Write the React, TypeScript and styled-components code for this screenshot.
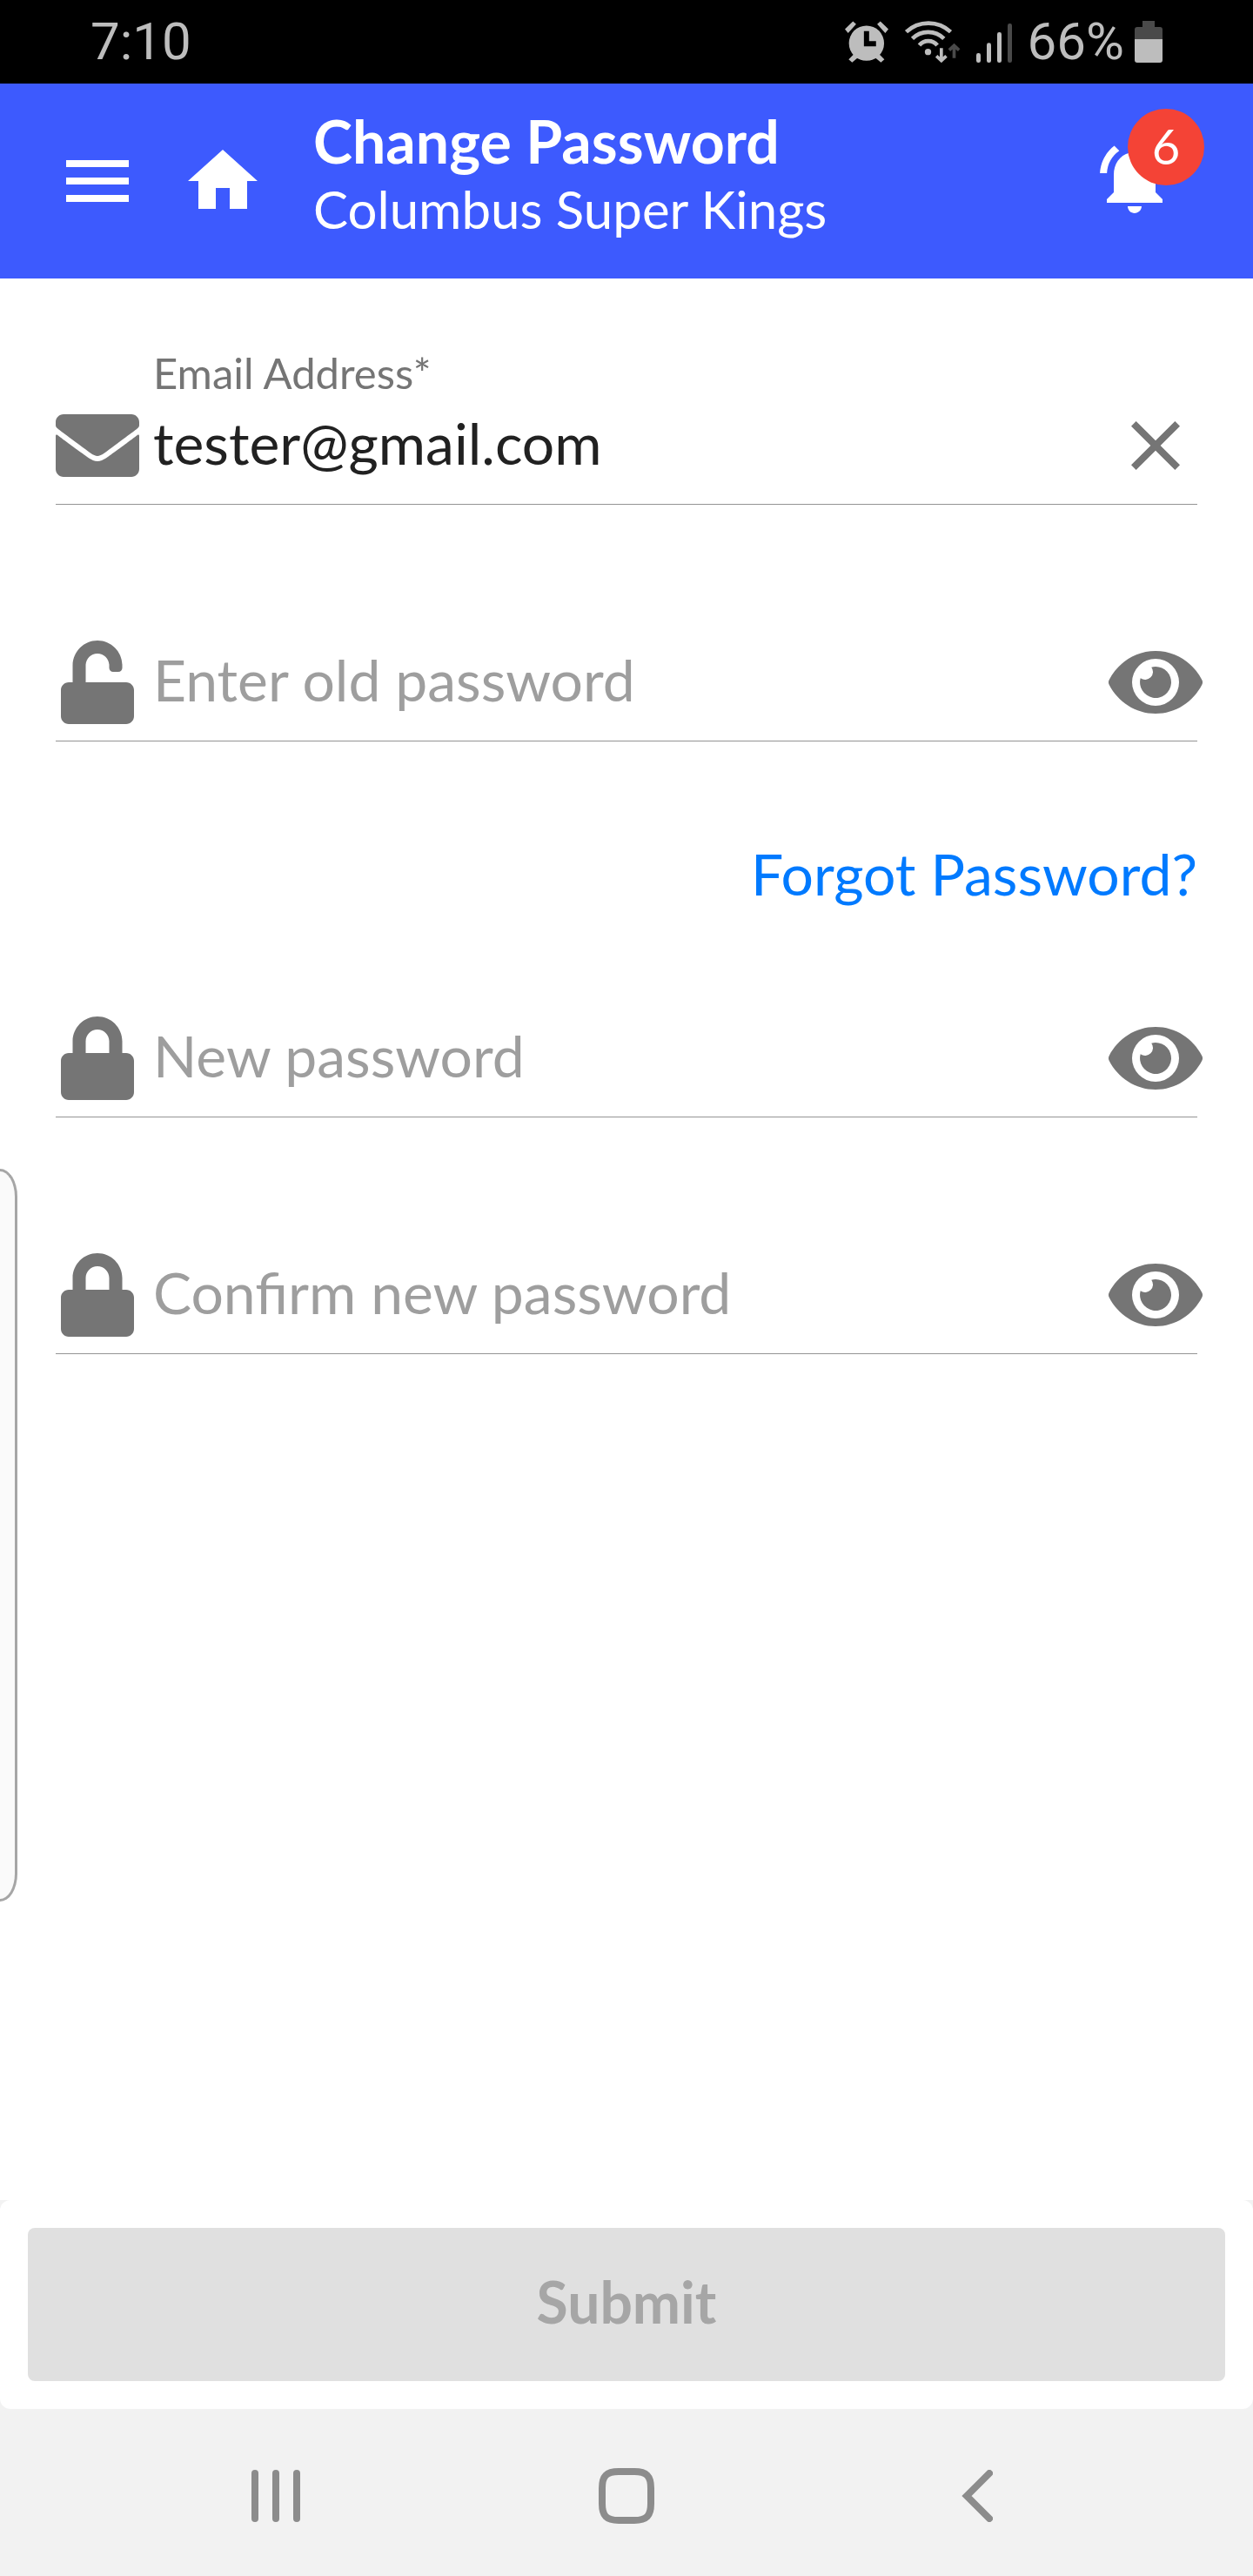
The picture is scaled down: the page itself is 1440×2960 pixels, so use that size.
import React, { useState } from "react";
import styled, { createGlobalStyle } from "styled-components";
import { FaEnvelope, FaEye, FaLock, FaUnlock } from "react-icons/fa";
import { MdClose, MdHome, MdMenu, MdNotificationsActive } from "react-icons/md";

const GlobalStyle = createGlobalStyle`
  *, *::before, *::after { box-sizing: border-box; }
  body {
    margin: 0;
    background: #fff;
    font-family: Lato, "Open Sans", sans-serif;
  }
  button, input { font-family: inherit; }
`;

const Screen = styled.div`
  position: relative;
  display: flex;
  flex-direction: column;
  min-height: 100vh;
`;

const StatusBar = styled.div`
  display: flex;
  align-items: center;
  justify-content: space-between;
  height: 96px;
  padding: 0 104px;
  background: #000;
  color: #bdbdbd;
  font-family: Roboto, sans-serif;
  font-size: 60px;
  line-height: 96px;
`;

const StatusIcons = styled.div`
  display: flex;
  align-items: center;
  gap: 18px;
  svg { display: block; height: 48px; }
`;

const Level = styled.div`
  display: flex;
  align-items: center;
  gap: 12px;
`;

const AppBar = styled.header`
  display: flex;
  align-items: center;
  height: 224px;
  padding: 0 88px 0 64px;
  background: #3d5afe;
  color: #fff;
`;

const IconButton = styled.button`
  display: flex;
  flex: none;
  align-items: center;
  justify-content: center;
  width: 96px;
  height: 96px;
  padding: 0;
  border: 0;
  background: none;
  color: inherit;
  cursor: pointer;
`;

const BarActions = styled.div`
  display: flex;
  gap: 48px;
`;

const Titles = styled.div`
  flex: 1;
  padding: 0 0 16px 56px;
`;

const Title = styled.h1`
  margin: 0;
  font-size: 68px;
  font-weight: 700;
  line-height: 80px;
`;

const Subtitle = styled.p`
  margin: 0;
  font-size: 60px;
  line-height: 76px;
`;

const BellButton = styled(IconButton)`
  position: relative;
  margin-bottom: 6px;
`;

const Badge = styled.span`
  position: absolute;
  top: -32px;
  left: 40px;
  width: 88px;
  height: 88px;
  border-radius: 50%;
  background: #f44336;
  font-size: 56px;
  line-height: 86px;
  text-align: center;
`;

const Form = styled.form`
  display: flex;
  flex: 1;
  flex-direction: column;
`;

const Fields = styled.div`
  display: flex;
  flex: 1;
  flex-direction: column;
  padding: 80px 64px;
`;

const Field = styled.div<{ $space: number }>`
  margin-top: ${(p) => p.$space}px;
  border-bottom: 1px solid #949494;
`;

const FieldLabel = styled.label`
  display: block;
  padding: 0 0 8px 112px;
  color: #757575;
  font-size: 49px;
  line-height: 56px;
`;

const FieldRow = styled.div`
  display: flex;
  align-items: center;
  gap: 16px;
  padding-bottom: 19px;
  color: #757575;
`;

const LeadIcon = styled.span`
  display: flex;
  flex: none;
  justify-content: center;
  width: 96px;
  svg { width: auto; height: 96px; }
`;

const EyeButton = styled(IconButton)`
  svg { flex: none; width: 108px; height: 96px; }
`;

const TextInput = styled.input`
  flex: 1;
  min-width: 0;
  height: 96px;
  padding: 0 0 8px;
  border: 0;
  outline: 0;
  background: none;
  color: #212121;
  font-size: 66px;
  &::placeholder { color: #9e9e9e; opacity: 1; }
`;

const ForgotLink = styled.a`
  align-self: flex-end;
  margin-top: 112px;
  color: #007aff;
  font-size: 66px;
  line-height: 80px;
  text-decoration: none;
`;

const Footer = styled.div`
  background: #f2f2f2;
`;

const FooterCard = styled.div`
  padding: 32px;
  border-radius: 12px;
  background: #fff;
`;

const SubmitButton = styled.button`
  display: block;
  width: 100%;
  height: 176px;
  padding: 0 0 8px;
  border: 0;
  border-radius: 8px;
  background: #e0e0e0;
  color: #a6a6a6;
  font-size: 66px;
  font-weight: 700;
`;

const NavBar = styled.nav`
  display: grid;
  grid-template-columns: repeat(3, 1fr);
  align-items: center;
  justify-items: center;
  height: 192px;
  padding: 8px 116px 0;
  background: #f2f2f2;
  color: #8c8c8c;
`;

const EdgeHandle = styled.div`
  position: absolute;
  top: 1343px;
  left: 0;
  width: 20px;
  height: 842px;
  border: 3px solid #a6a6a6;
  border-left: 0;
  border-radius: 0 20px 20px 0 / 0 32px 32px 0;
  background: #fafafa;
`;

function AlarmIcon() {
  return (
    <svg width="50" viewBox="94 69 151 144" fill="currentColor" aria-hidden="true">
      <circle cx="169" cy="146" r="61" />
      <path d="M94 97l28-27 11 10-28 31zM206 80l11-10 28 27-11 14zM107 202l18-18 14 12-20 17zM231 202l-18-18-14 12 20 17z" />
      <path d="M169 104v44h33" fill="none" stroke="#000" strokeWidth="18" />
    </svg>
  );
}

function WifiIcon() {
  return (
    <svg width="65" viewBox="302 69 194 144" fill="none" stroke="currentColor" strokeWidth="14" aria-hidden="true">
      <path d="M309 107a112 112 0 0 1 153 0M330 130a77 77 0 0 1 109 0M354 153a40 40 0 0 1 62 0" />
      <circle cx="384" cy="176" r="11" fill="currentColor" stroke="none" />
      <path d="M430 163v40M413 190l17 16 17-16" strokeWidth="11" />
      <path d="M474 197v-40M457 170l17-16 17 16" stroke="#4a4a4a" strokeWidth="11" />
    </svg>
  );
}

function SignalIcon() {
  return (
    <svg width="41" viewBox="534 69 123 144" fill="currentColor" aria-hidden="true">
      <rect x="534" y="180" width="15" height="33" rx="7" />
      <rect x="570" y="145" width="15" height="68" rx="7" />
      <rect x="606" y="108" width="15" height="105" rx="7" />
      <rect x="642" y="78" width="15" height="135" rx="7" fill="#4a4a4a" />
    </svg>
  );
}

function BatteryIcon() {
  return (
    <svg width="32" viewBox="0 0 32 48" fill="currentColor" aria-hidden="true">
      <path d="M9 0h14v7h6a3 3 0 0 1 3 3v11H0V10a3 3 0 0 1 3-3h6z" fill="#4a4a4a" />
      <path d="M0 21h32v24a3 3 0 0 1-3 3H3a3 3 0 0 1-3-3z" />
    </svg>
  );
}

function RecentsIcon() {
  return (
    <svg width="56" height="60" viewBox="0 0 56 60" fill="currentColor" aria-hidden="true">
      <rect width="8" height="60" rx="4" />
      <rect x="24" width="8" height="60" rx="4" />
      <rect x="48" width="8" height="60" rx="4" />
    </svg>
  );
}

function HomeKeyIcon() {
  return (
    <svg width="64" height="64" viewBox="0 0 64 64" fill="none" stroke="currentColor" strokeWidth="8" aria-hidden="true">
      <path d="M23 4h18c14 0 19 5 19 19v18c0 14-5 19-19 19H23C9 60 4 55 4 41V23C4 9 9 4 23 4z" />
    </svg>
  );
}

function BackIcon() {
  return (
    <svg width="36" height="60" viewBox="0 0 36 60" fill="none" stroke="currentColor" strokeWidth="8" strokeLinecap="round" aria-hidden="true">
      <path d="M32 4L6 30l26 26" />
    </svg>
  );
}

type PasswordFieldProps = {
  name: string;
  placeholder: string;
  space: number;
  unlocked?: boolean;
};

function PasswordField({ name, placeholder, space, unlocked }: PasswordFieldProps) {
  const [visible, setVisible] = useState(false);
  return (
    <Field $space={space}>
      <FieldRow>
        <LeadIcon>{unlocked ? <FaUnlock /> : <FaLock />}</LeadIcon>
        <TextInput
          type={visible ? "text" : "password"}
          name={name}
          aria-label={placeholder}
          placeholder={placeholder}
        />
        <EyeButton type="button" aria-label="Show password" onClick={() => setVisible(!visible)}>
          <FaEye />
        </EyeButton>
      </FieldRow>
    </Field>
  );
}

export default function App() {
  const [email, setEmail] = useState("tester@gmail.com");
  return (
    <Screen>
      <GlobalStyle />
      <StatusBar>
        <span>7:10</span>
        <StatusIcons>
          <AlarmIcon />
          <WifiIcon />
          <SignalIcon />
          <Level>
            <span>66%</span>
            <BatteryIcon />
          </Level>
        </StatusIcons>
      </StatusBar>
      <AppBar>
        <BarActions>
          <IconButton type="button" aria-label="Menu"><MdMenu size={96} /></IconButton>
          <IconButton type="button" aria-label="Home"><MdHome size={96} /></IconButton>
        </BarActions>
        <Titles>
          <Title>Change Password</Title>
          <Subtitle>Columbus Super Kings</Subtitle>
        </Titles>
        <BellButton type="button" aria-label="Notifications">
          <MdNotificationsActive size={96} />
          <Badge>6</Badge>
        </BellButton>
      </AppBar>
      <Form onSubmit={(e) => e.preventDefault()}>
        <Fields>
          <Field $space={0}>
            <FieldLabel htmlFor="email">Email Address*</FieldLabel>
            <FieldRow>
              <LeadIcon><FaEnvelope /></LeadIcon>
              <TextInput id="email" type="text" value={email} onChange={(e) => setEmail(e.target.value)} />
              <IconButton type="button" aria-label="Clear email" onClick={() => setEmail("")}>
                <MdClose size={96} />
              </IconButton>
            </FieldRow>
          </Field>
          <PasswordField name="old" placeholder="Enter old password" space={156} unlocked />
          <ForgotLink href="#forgot">Forgot Password?</ForgotLink>
          <PasswordField name="new" placeholder="New password" space={124} />
          <PasswordField name="confirm" placeholder="Confirm new password" space={156} />
        </Fields>
        <Footer>
          <FooterCard>
            <SubmitButton type="submit" disabled>Submit</SubmitButton>
          </FooterCard>
        </Footer>
      </Form>
      <NavBar>
        <IconButton type="button" aria-label="Recent apps"><RecentsIcon /></IconButton>
        <IconButton type="button" aria-label="Home screen"><HomeKeyIcon /></IconButton>
        <IconButton type="button" aria-label="Back"><BackIcon /></IconButton>
      </NavBar>
      <EdgeHandle />
    </Screen>
  );
}
